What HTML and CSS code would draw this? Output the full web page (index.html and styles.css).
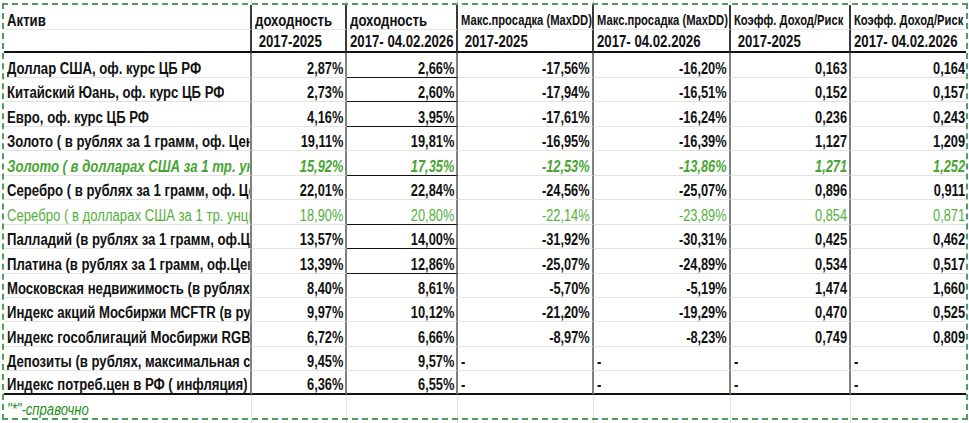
FILE: index.html
```html
<!DOCTYPE html>
<html lang="ru">
<head>
<meta charset="utf-8">
<title>Активы 2017-2026</title>
<link rel="stylesheet" href="styles.css">
</head>
<body>
<div class="sheet">
  <div class="strip">
    <div class="s"></div><div class="s"></div><div class="s"></div><div class="s"></div><div class="s"></div><div class="s"></div><div class="s last"></div>
  </div>
  <div class="grid">
    <div class="c h h1 l"><span class="t tl">Актив</span></div>
    <div class="c h h1 l"><span class="t tl">доходность</span></div>
    <div class="c h h1 l"><span class="t tl">доходность</span></div>
    <div class="c h h1 l sm"><span class="t tl">Макс.просадка (MaxDD)</span></div>
    <div class="c h h1 l sm"><span class="t tl">Макс.просадка (MaxDD)</span></div>
    <div class="c h h1 l sm"><span class="t tl">Коэфф. Доход/Риск</span></div>
    <div class="c h h1 l sm last"><span class="t tl">Коэфф. Доход/Риск</span></div>

    <div class="c h h2 l"></div>
    <div class="c h h2 l"><span class="t tl">&nbsp;2017-2025</span></div>
    <div class="c h h2 l"><span class="t tl">2017- 04.02.2026</span></div>
    <div class="c h h2 l"><span class="t tl">&nbsp;2017-2025</span></div>
    <div class="c h h2 l"><span class="t tl">2017- 04.02.2026</span></div>
    <div class="c h h2 l"><span class="t tl">&nbsp;2017-2025</span></div>
    <div class="c h h2 l last"><span class="t tl">2017- 04.02.2026</span></div>

    <div class="c l"><span class="t tl">Доллар США, оф. курс ЦБ РФ</span></div>
    <div class="c r"><span class="t tr">2,87%</span></div>
    <div class="c r bx"><span class="t tr">2,66%</span></div>
    <div class="c r"><span class="t tr">-17,56%</span></div>
    <div class="c r"><span class="t tr">-16,20%</span></div>
    <div class="c r"><span class="t tr">0,163</span></div>
    <div class="c r last"><span class="t tr">0,164</span></div>

    <div class="c l"><span class="t tl">Китайский Юань, оф. курс ЦБ РФ</span></div>
    <div class="c r"><span class="t tr">2,73%</span></div>
    <div class="c r bx"><span class="t tr">2,60%</span></div>
    <div class="c r"><span class="t tr">-17,94%</span></div>
    <div class="c r"><span class="t tr">-16,51%</span></div>
    <div class="c r"><span class="t tr">0,152</span></div>
    <div class="c r last"><span class="t tr">0,157</span></div>

    <div class="c l"><span class="t tl">Евро, оф. курс ЦБ РФ</span></div>
    <div class="c r"><span class="t tr">4,16%</span></div>
    <div class="c r bx"><span class="t tr">3,95%</span></div>
    <div class="c r"><span class="t tr">-17,61%</span></div>
    <div class="c r"><span class="t tr">-16,24%</span></div>
    <div class="c r"><span class="t tr">0,236</span></div>
    <div class="c r last"><span class="t tr">0,243</span></div>

    <div class="c l"><span class="t tl">Золото ( в рублях за 1 грамм, оф. Цена ЦБ РФ)</span></div>
    <div class="c r"><span class="t tr">19,11%</span></div>
    <div class="c r"><span class="t tr">19,81%</span></div>
    <div class="c r"><span class="t tr">-16,95%</span></div>
    <div class="c r"><span class="t tr">-16,39%</span></div>
    <div class="c r"><span class="t tr">1,127</span></div>
    <div class="c r last"><span class="t tr">1,209</span></div>

    <div class="c l gi"><span class="t tl">Золото ( в долларах США за 1 тр. унцию)</span></div>
    <div class="c r gi"><span class="t tr">15,92%</span></div>
    <div class="c r gi bx"><span class="t tr">17,35%</span></div>
    <div class="c r gi"><span class="t tr">-12,53%</span></div>
    <div class="c r gi"><span class="t tr">-13,86%</span></div>
    <div class="c r gi"><span class="t tr">1,271</span></div>
    <div class="c r gi last"><span class="t tr">1,252</span></div>

    <div class="c l"><span class="t tl">Серебро ( в рублях за 1 грамм, оф. Цена ЦБ РФ)</span></div>
    <div class="c r"><span class="t tr">22,01%</span></div>
    <div class="c r"><span class="t tr">22,84%</span></div>
    <div class="c r"><span class="t tr">-24,56%</span></div>
    <div class="c r"><span class="t tr">-25,07%</span></div>
    <div class="c r"><span class="t tr">0,896</span></div>
    <div class="c r last"><span class="t tr">0,911</span></div>

    <div class="c l gn"><span class="t tl">Серебро ( в долларах США за 1 тр. унцию)</span></div>
    <div class="c r gn"><span class="t tr">18,90%</span></div>
    <div class="c r gn bx"><span class="t tr">20,80%</span></div>
    <div class="c r gn"><span class="t tr">-22,14%</span></div>
    <div class="c r gn"><span class="t tr">-23,89%</span></div>
    <div class="c r gn"><span class="t tr">0,854</span></div>
    <div class="c r gn last"><span class="t tr">0,871</span></div>

    <div class="c l"><span class="t tl">Палладий (в рублях за 1 грамм, оф.Цена ЦБ РФ)</span></div>
    <div class="c r"><span class="t tr">13,57%</span></div>
    <div class="c r bx"><span class="t tr">14,00%</span></div>
    <div class="c r"><span class="t tr">-31,92%</span></div>
    <div class="c r"><span class="t tr">-30,31%</span></div>
    <div class="c r"><span class="t tr">0,425</span></div>
    <div class="c r last"><span class="t tr">0,462</span></div>

    <div class="c l"><span class="t tl">Платина (в рублях за 1 грамм, оф.Цена ЦБ РФ)</span></div>
    <div class="c r"><span class="t tr">13,39%</span></div>
    <div class="c r bx"><span class="t tr">12,86%</span></div>
    <div class="c r"><span class="t tr">-25,07%</span></div>
    <div class="c r"><span class="t tr">-24,89%</span></div>
    <div class="c r"><span class="t tr">0,534</span></div>
    <div class="c r last"><span class="t tr">0,517</span></div>

    <div class="c l"><span class="t tl">Московская недвижимость (в рублях за кв.м)</span></div>
    <div class="c r"><span class="t tr">8,40%</span></div>
    <div class="c r"><span class="t tr">8,61%</span></div>
    <div class="c r"><span class="t tr">-5,70%</span></div>
    <div class="c r"><span class="t tr">-5,19%</span></div>
    <div class="c r"><span class="t tr">1,474</span></div>
    <div class="c r last"><span class="t tr">1,660</span></div>

    <div class="c l"><span class="t tl">Индекс акций Мосбиржи MCFTR (в рублях)</span></div>
    <div class="c r"><span class="t tr">9,97%</span></div>
    <div class="c r"><span class="t tr">10,12%</span></div>
    <div class="c r"><span class="t tr">-21,20%</span></div>
    <div class="c r"><span class="t tr">-19,29%</span></div>
    <div class="c r"><span class="t tr">0,470</span></div>
    <div class="c r last"><span class="t tr">0,525</span></div>

    <div class="c l"><span class="t tl">Индекс гособлигаций Мосбиржи RGBITR</span></div>
    <div class="c r"><span class="t tr">6,72%</span></div>
    <div class="c r"><span class="t tr">6,66%</span></div>
    <div class="c r"><span class="t tr">-8,97%</span></div>
    <div class="c r"><span class="t tr">-8,23%</span></div>
    <div class="c r"><span class="t tr">0,749</span></div>
    <div class="c r last"><span class="t tr">0,809</span></div>

    <div class="c l"><span class="t tl">Депозиты (в рублях, максимальная ставка)</span></div>
    <div class="c r"><span class="t tr">9,45%</span></div>
    <div class="c r"><span class="t tr">9,57%</span></div>
    <div class="c l"><span class="t tl">-</span></div>
    <div class="c l"><span class="t tl">-</span></div>
    <div class="c l"><span class="t tl">-</span></div>
    <div class="c l last"><span class="t tl">-</span></div>

    <div class="c l end"><span class="t tl">Индекс потреб.цен в РФ ( инфляция)</span></div>
    <div class="c r end"><span class="t tr">6,36%</span></div>
    <div class="c r end"><span class="t tr">6,55%</span></div>
    <div class="c l end"><span class="t tl">-</span></div>
    <div class="c l end"><span class="t tl">-</span></div>
    <div class="c l end"><span class="t tl">-</span></div>
    <div class="c l end last"><span class="t tl">-</span></div>

    <div class="c f l note"><span class="t tl">"*"-справочно</span></div>
    <div class="c f"></div>
    <div class="c f"></div>
    <div class="c f"></div>
    <div class="c f"></div>
    <div class="c f"></div>
    <div class="c f last"></div>
  </div>
  <div class="strip">
    <div class="s"></div><div class="s"></div><div class="s"></div><div class="s"></div><div class="s"></div><div class="s"></div><div class="s last"></div>
  </div>
</div>
</body>
</html>
```

FILE: styles.css
```css
html, body {
  margin: 0;
  padding: 0;
  background: #ffffff;
}

.sheet {
  width: 969px;
  height: 423px;
  overflow: hidden;
}

.strip {
  margin-left: 4px;
  width: 962px;
  height: 3px;
  display: grid;
  grid-template-columns: 248px 95px 111px 136px 137px 120px 115px;
}

.s {
  border-right: 1px solid #d4d4d4;
}

.s.last { border-right: none; }

.grid {
  margin-left: 2px;
  width: 966px;
  box-sizing: border-box;
  border: 2px dashed #4f9d5f;
  display: grid;
  grid-template-columns: 248px 95px 111px 136px 137px 120px 115px;
  grid-template-rows: 25px 23px 25px 24px 25px 24px 25px 24px 25px 24px 25px 24px 24px 25px 24px 24px 23px;
  font-family: "Liberation Sans", Arial, sans-serif;
  font-weight: bold;
  font-size: 16px;
  color: #111111;
}

.c {
  display: flex;
  align-items: flex-end;
  box-sizing: border-box;
  overflow: hidden;
  white-space: nowrap;
  line-height: 17px;
  padding: 0 2px 0 3px;
  border-right: 2px solid #808080;
  border-bottom: 1px solid #e2e2e2;
}

.c.last {
  border-right: none;
  padding-right: 1px;
}

/* condensed face (Arial Narrow look) */
.t {
  display: inline-block;
  flex: none;
  transform: scaleX(0.8);
}

.tl { transform-origin: left bottom; }
.tr { transform-origin: right bottom; }

.l .t {
  transform: scaleX(0.82);
  max-width: calc((100% + 2px) / 0.82);
  overflow: hidden;
}

.l { justify-content: flex-start; }
.r { justify-content: flex-end; }

.h {
  border-right-color: #3a3a3a;
}

.h .t {
  max-width: none;
  overflow: visible;
}

.h1 {
  border-bottom: 1px solid #e6e6e6;
  font-size: 16.5px;
  line-height: 18px;
}

.h1 .t { transform: scaleX(0.8); }

.h1.sm { font-size: 14px; }

.h2 {
  border-bottom: 2px solid #111111;
  font-size: 16.5px;
  line-height: 19px;
}

.h2 .t { transform: scaleX(0.8); }

.bx { border-bottom: 1px solid #111111; }

.end { border-bottom: 2px solid #111111; }

.f {
  border-right: 1px solid #e4e4e4;
  border-bottom: none;
}

.gi {
  color: #46a531;
  font-style: italic;
}

.gn {
  color: #55b03b;
  font-weight: normal;
}

.note {
  color: #1f8f24;
  font-style: italic;
  font-weight: normal;
  font-size: 16px;
}
```
